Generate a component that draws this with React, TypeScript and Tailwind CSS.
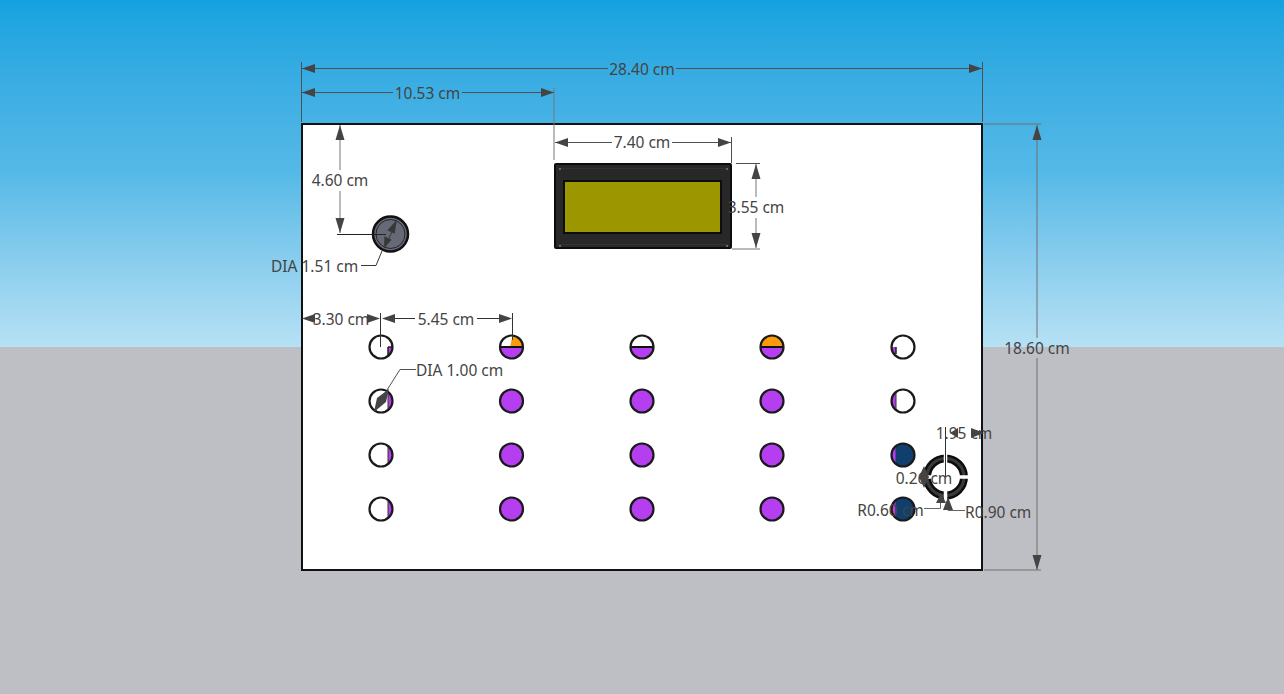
const INK = '#444444'
const LINE = '#505050'
const PURPLE = '#b53ff0'
const ORANGE = '#ff9a0a'
const NAVY = '#103f6e'

const COLS = [381, 511.5, 642, 772, 903]
const ROWS = [347, 401, 455, 509]
const R = 11.5

function Arrow({ x, y, dir }: { x: number; y: number; dir: 'l' | 'r' | 'u' | 'd' }) {
  const pts = {
    l: `${x},${y} ${x + 13},${y - 4.5} ${x + 13},${y + 4.5}`,
    r: `${x},${y} ${x - 13},${y - 4.5} ${x - 13},${y + 4.5}`,
    u: `${x},${y} ${x - 4.5},${y + 15} ${x + 4.5},${y + 15}`,
    d: `${x},${y} ${x - 4.5},${y - 15} ${x + 4.5},${y - 15}`,
  }[dir]
  return <polygon points={pts} fill={INK} />
}

function Line({ d, color = LINE }: { d: string; color?: string }) {
  return <path d={d} fill="none" stroke={color} strokeWidth={1} />
}

function Label({ x, y, children, anchor = 'middle' }: { x: number; y: number; children: string; anchor?: 'middle' | 'start' }) {
  return (
    <text x={x} y={y} textAnchor={anchor} fontSize={15.5} fill={INK} style={{ fontFamily: '"Noto Sans", sans-serif' }}>
      {children}
    </text>
  )
}

function Hole({ cx, cy, children, fill = 'white' }: { cx: number; cy: number; children?: React.ReactNode; fill?: string }) {
  const id = `c${Math.round(cx)}-${cy}`
  return (
    <g>
      <clipPath id={id}>
        <circle cx={cx} cy={cy} r={R} />
      </clipPath>
      <circle cx={cx} cy={cy} r={R} fill={fill} />
      <g clipPath={`url(#${id})`}>{children}</g>
      <circle cx={cx} cy={cy} r={R} fill="none" stroke="#1a1a1a" strokeWidth={2.2} />
    </g>
  )
}

function Board() {
  const cx = 945.5
  const cy = 477
  return (
    <svg className="absolute inset-0" width={1284} height={694} viewBox="0 0 1284 694">
      {/* panel */}
      <rect x={302} y={124} width={680} height={446} fill="white" stroke="#111" strokeWidth={2} />

      {/* lcd */}
      <rect x={555} y={164} width={176} height={84} rx={1} fill="#282828" stroke="#0c0c0c" strokeWidth={2} />
      <path d="M558 168.5H728M558 244.5H728" stroke="#333" strokeWidth={1} />
      <rect x={564} y={181} width={157} height={52} fill="#9c9700" stroke="#0c0c0c" strokeWidth={2} />
      {[[559, 168], [726, 168], [559, 245], [726, 245]].map(([x, y]) => (
        <rect key={`${x}-${y}`} x={x} y={y} width={2} height={2} fill="#666" />
      ))}

      {/* knob */}
      <circle cx={390.5} cy={234} r={17.5} fill="#666a76" stroke="#111" strokeWidth={2.5} />
      <circle cx={390.5} cy={234} r={14.5} fill="none" stroke="#26262a" strokeWidth={1} />

      {/* holes */}
      <Hole cx={COLS[0]} cy={ROWS[0]}>
        <path d="M388 347H394V359H388Z" fill={PURPLE} />
        <path d="M388 347V357M388 347H394" stroke="#222" strokeWidth={1.5} />
      </Hole>
      {ROWS.slice(1).map((y) => (
        <Hole key={y} cx={COLS[0]} cy={y}>
          <rect x={388} y={y - 13} width={7} height={26} fill={PURPLE} />
          <path d={`M388 ${y - 13}V${y + 13}`} stroke="#333" strokeWidth={1} />
        </Hole>
      ))}

      <Hole cx={COLS[1]} cy={ROWS[0]}>
        <rect x={499} y={347} width={26} height={13} fill={PURPLE} />
        <polygon points="513,334 525,334 525,347 510,347" fill={ORANGE} />
        <path d="M499 347H525" stroke="#111" strokeWidth={2} />
      </Hole>
      <Hole cx={COLS[2]} cy={ROWS[0]}>
        <rect x={629} y={347} width={26} height={13} fill={PURPLE} />
        <path d="M629 347H655" stroke="#111" strokeWidth={2} />
      </Hole>
      <Hole cx={COLS[3]} cy={ROWS[0]}>
        <rect x={759} y={334} width={26} height={13} fill={ORANGE} />
        <rect x={759} y={347} width={26} height={13} fill={PURPLE} />
        <path d="M759 347H785" stroke="#111" strokeWidth={2} />
      </Hole>

      {COLS.slice(1, 4).flatMap((x) => ROWS.slice(1).map((y) => <Hole key={`${x}-${y}`} cx={x} cy={y} fill={PURPLE} />))}

      <Hole cx={COLS[4]} cy={ROWS[0]}>
        <path d="M890 347H896V354H890Z" fill={PURPLE} />
        <path d="M896 347V354" stroke="#222" strokeWidth={1.5} />
      </Hole>
      <Hole cx={COLS[4]} cy={ROWS[1]}>
        <rect x={890} y={388} width={6} height={26} fill={PURPLE} />
        <path d="M896 388V414" stroke="#333" strokeWidth={1} />
      </Hole>
      {ROWS.slice(2).map((y) => (
        <Hole key={y} cx={COLS[4]} cy={y} fill={NAVY}>
          <rect x={890} y={y - 13} width={5.5} height={26} fill={PURPLE} />
        </Hole>
      ))}

      {/* slotted ring */}
      <circle cx={cx} cy={cy} r={18.5} fill="none" stroke="#0c0c0c" strokeWidth={8} />
      <circle cx={cx} cy={cy} r={18.5} fill="none" stroke="#3a3a3a" strokeWidth={3} />
      <path d={`M${cx - 26} ${cy}H${cx - 12}M${cx + 12} ${cy}H${cx + 26}M${cx} ${cy + 12}V${cy + 26}`} stroke="white" strokeWidth={3.5} />
      <path d={`M${cx} ${cy - 26}V${cy - 12}`} stroke="white" strokeWidth={3.5} />

      {/* overall width */}
      <Line d="M301.5 62V122M982.5 62V122" />
      <Line d="M302 68.5H608M676 68.5H982" />
      <Arrow x={302} y={68.5} dir="l" />
      <Arrow x={982} y={68.5} dir="r" />
      <Label x={642} y={75}>28.40 cm</Label>

      {/* lcd offset */}
      <Line d="M302 92.5H393M462 92.5H554" />
      <Line d="M554 88V160" color="#777" />
      <Arrow x={302} y={92.5} dir="l" />
      <Arrow x={554} y={92.5} dir="r" />
      <Label x={427.5} y={99}>10.53 cm</Label>

      {/* lcd width */}
      <Line d="M555 142.5H612M672 142.5H731" />
      <Line d="M731.5 137V163" />
      <Arrow x={555} y={142.5} dir="l" />
      <Arrow x={731} y={142.5} dir="r" />
      <Label x={642} y={148}>7.40 cm</Label>

      {/* lcd height */}
      <Line d="M736 163.5H760" />
      <Line d="M732 249H760M756 164V197M756 218V248" color="#777" />
      <Arrow x={756} y={164} dir="u" />
      <Arrow x={756} y={248} dir="d" />
      <Label x={756} y={212.5}>3.55 cm</Label>

      {/* overall height */}
      <Line d="M984 124H1041M984 570H1041M1037 125V338M1037 358V570" color="#707070" />
      <Arrow x={1037} y={125} dir="u" />
      <Arrow x={1037} y={570} dir="d" />
      <Label x={1037} y={353.5}>18.60 cm</Label>

      {/* knob offset and diameter */}
      <Line d="M340 125V170M340 191V233" color="#777" />
      <Line d="M337 234.5H386" color="#222" />
      <Arrow x={340} y={125} dir="u" />
      <Arrow x={340} y={233} dir="d" />
      <Label x={340} y={185.5}>4.60 cm</Label>
      <polygon points="397,219.5 394.6,233.8 387.4,230.2" fill="#383838" />
      <polygon points="384,248.5 384.4,236.2 391.6,239.8" fill="#383838" />
      <Line d="M361 265.5H376L382 251M388 240L394 228" color="#383838" />
      <Label x={271} y={271.5} anchor="start">DIA 1.51 cm</Label>

      {/* hole spacing */}
      <Line d="M380.5 313V347M512.5 313V340M395 318.5H415M477 318.5H499" color="#333" />
      <Arrow x={302} y={318.5} dir="l" />
      <Arrow x={380} y={318.5} dir="r" />
      <Arrow x={382} y={318.5} dir="l" />
      <Arrow x={512} y={318.5} dir="r" />
      <Label x={341} y={324.5}>3.30 cm</Label>
      <Label x={446} y={324.5}>5.45 cm</Label>

      {/* hole diameter */}
      <polygon points="389,389 386,402 374,412 377,398" fill={INK} />
      <Line d="M416 369.5H400L387 390" />
      <Label x={416} y={375.5} anchor="start">DIA 1.00 cm</Label>

      {/* slot dimensions */}
      <Line d="M945.5 427V477" color="#333" />
      <polygon points="950,433 958,428 958,438" fill={INK} />
      <polygon points="971,428 984,433 971,438" fill={INK} />
      <Label x={964} y={438.5}>1.95 cm</Label>
      <polygon points="924,466 919,477 929,477" fill={INK} />
      <polygon points="924,488 919,477 929,477" fill={INK} />
      <Label x={924} y={483.5}>0.26 cm</Label>
      <Line d="M924 508.5H940.5V497M948 503V510.5H965" color="#666" />
      <polygon points="941,493 936,503 946,503" fill={INK} />
      <polygon points="948,497 943,510 953,510" fill={INK} />
      <Label x={890.5} y={515.5}>R0.60 cm</Label>
      <Label x={965} y={517.5} anchor="start">R0.90 cm</Label>
    </svg>
  )
}

export default function App() {
  return (
    <div className="relative h-[694px] w-[1284px] overflow-hidden">
      <div className="flex h-full flex-col">
        <div className="h-[347px] bg-gradient-to-b from-[#12a2df] via-[#55b9e7] via-50% to-[#b6e1f4]" />
        <div className="flex-1 bg-[#bebfc4]" />
      </div>
      <Board />
    </div>
  )
}
